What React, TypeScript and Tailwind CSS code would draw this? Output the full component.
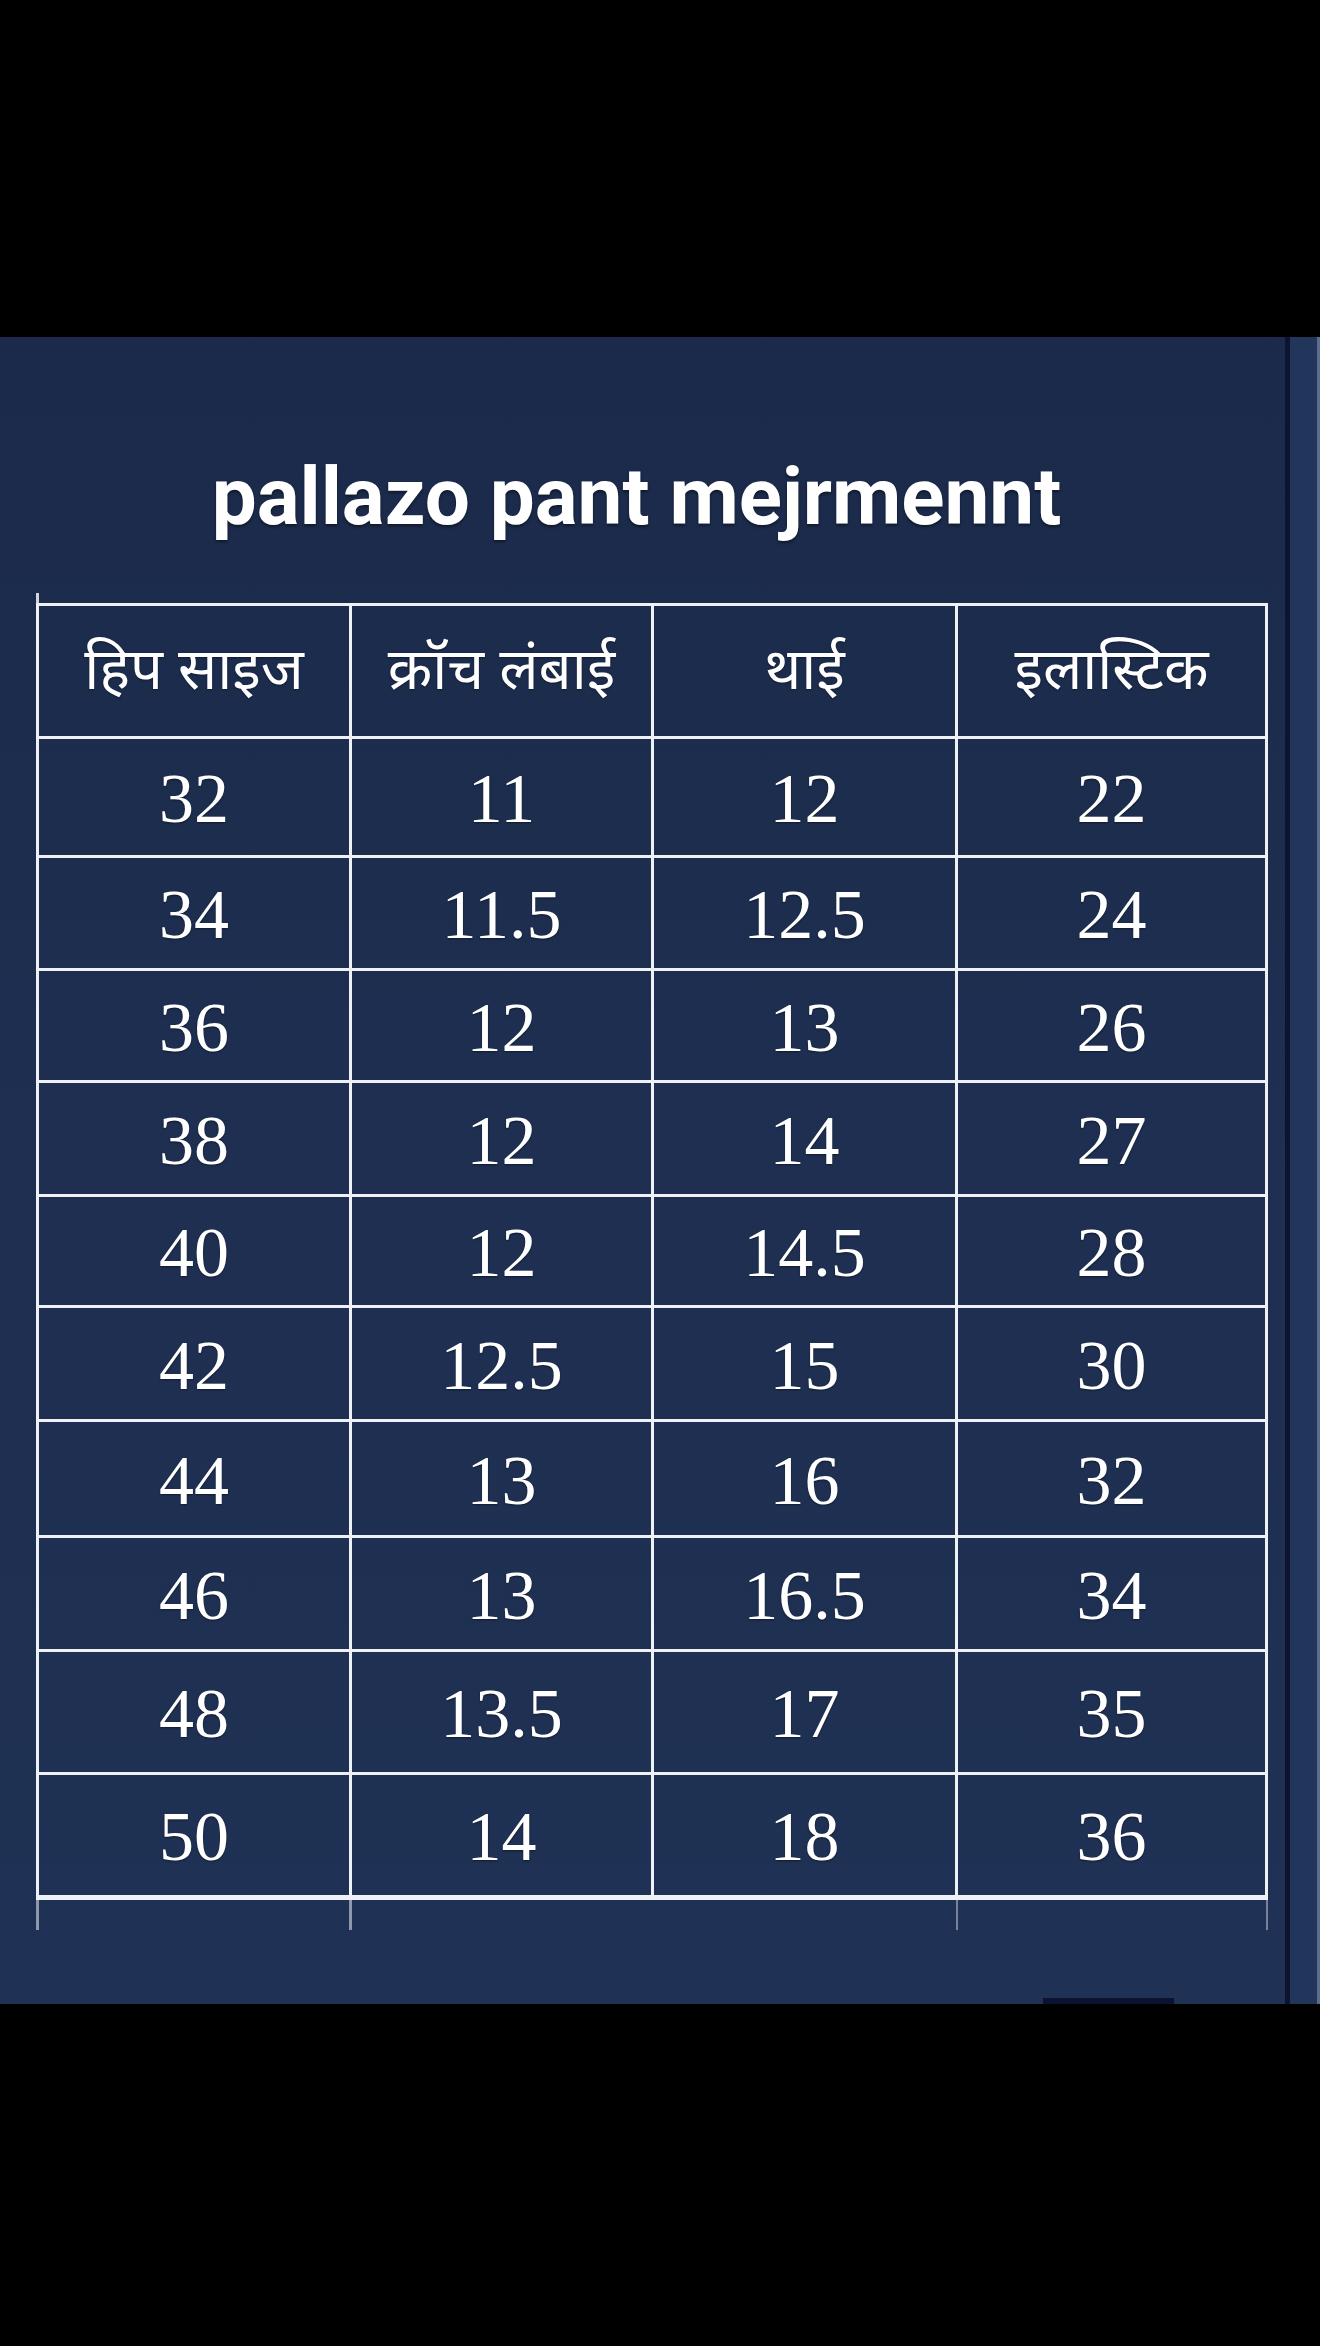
const rows = [
  { h: "h-[119px]", v: ["32", "11", "12", "22"] },
  { h: "h-[113px]", v: ["34", "11.5", "12.5", "24"] },
  { h: "h-[112px]", v: ["36", "12", "13", "26"] },
  { h: "h-[114px]", v: ["38", "12", "14", "27"] },
  { h: "h-[111px]", v: ["40", "12", "14.5", "28"] },
  { h: "h-[114px]", v: ["42", "12.5", "15", "30"] },
  { h: "h-[116px]", v: ["44", "13", "16", "32"] },
  { h: "h-[114px]", v: ["46", "13", "16.5", "34"] },
  { h: "h-[123px]", v: ["48", "13.5", "17", "35"] },
  { h: "h-[125px] border-b-[5px]", v: ["50", "14", "18", "36"] },
];

const headers = ["हिप साइज", "क्रॉच लंबाई", "थाई", "इलास्टिक"];

// column widths incl. right border line
const cols = ["w-[313px]", "w-[302px]", "w-[304px]", "w-[310px]"];

export default function App() {
  return (
    <div className="w-[1320px] h-[2346px] bg-black flex flex-col">
      <div className="h-[337px] shrink-0" />

      <div className="h-[1667px] shrink-0 flex">
        {/* main board */}
        <div className="w-[1285px] flex flex-col bg-linear-to-b from-[#1b2a4a] via-[#1e2f51] to-[#1f3154]">
          <h1 className="pt-[120px] pr-[12px] text-center text-white font-bold text-[80px] leading-[80px] [font-family:Roboto,'Liberation_Sans',sans-serif] [text-shadow:0_2px_3px_rgba(0,0,0,0.45)]">
            pallazo pant mejrmennt
          </h1>

          <div className="ml-[36px] mt-[56px] w-[1232px] flex flex-col">
            {/* stub of the left line above the top rule */}
            <div className="h-[10px] border-l-[3px] border-white/80" />

            <div className="border-l-[3px] border-t-[3px] border-[#eef1f6] text-white">
              <div className="h-[133px] flex border-b-[3px] border-[#eef1f6]">
                {headers.map((t, i) => (
                  <div
                    key={t}
                    className={`${cols[i]} shrink-0 border-r-[3px] border-[#eef1f6] flex items-center justify-center pt-[8px] text-[58px] [font-family:'Noto_Sans_Devanagari','Noto_Sans',sans-serif] [text-shadow:0_1px_2px_rgba(0,0,0,0.4)]`}
                  >
                    {t}
                  </div>
                ))}
              </div>

              {rows.map((r, ri) => (
                <div key={ri} className={`${r.h} flex border-b-[3px] border-[#eef1f6]`}>
                  {r.v.map((n, i) => (
                    <div
                      key={i}
                      className={`${cols[i]} shrink-0 border-r-[3px] border-[#eef1f6] flex items-center justify-center pt-[4px] text-[70px] leading-none [font-family:'Liberation_Serif','Times_New_Roman',serif] [text-shadow:0_1px_2px_rgba(0,0,0,0.45)]`}
                    >
                      {n}
                    </div>
                  ))}
                </div>
              ))}
            </div>

            {/* lines running past the bottom rule */}
            <div className="h-[30px] flex border-l-[3px] border-white/50">
              <div className="w-[313px] shrink-0 border-r-[3px] border-white/50" />
              <div className="w-[302px] shrink-0" />
              <div className="w-[304px] shrink-0 border-r-[2px] border-white/40" />
              <div className="w-[310px] shrink-0 border-r-[2px] border-white/40" />
            </div>
          </div>

          <div className="mt-auto h-[6px] flex">
            <div className="ml-[1043px] w-[131px] bg-[#0b1330]" />
          </div>
        </div>

        {/* edge of the board */}
        <div className="w-[5px] bg-[#0c1430]" />
        <div className="w-[27px] bg-[#22355b]" />
        <div className="w-[3px] bg-[#5d6c8c]" />
      </div>
    </div>
  );
}
